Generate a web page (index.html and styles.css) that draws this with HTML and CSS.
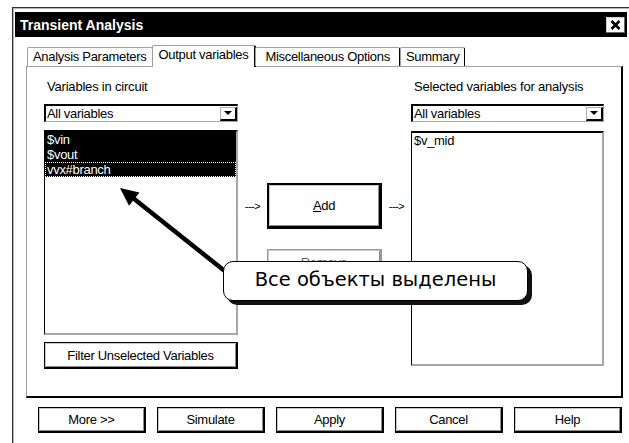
FILE: index.html
```html
<!DOCTYPE html>
<html lang="ru">
<head>
    <meta charset="UTF-8">
    <title>Transient Analysis</title>
    <link rel="stylesheet" href="styles.css">
</head>
<body>
    <div class="window">
        <div class="titlebar">
            <span class="title">Transient Analysis</span>
            <span class="close">
                <svg width="11" height="10" viewBox="0 0 11 10">
                    <path d="M1.5 1 L9.5 9 M9.5 1 L1.5 9" stroke="#000" stroke-width="2.6"/>
                </svg>
            </span>
        </div>

        <div class="dialog">
            <div class="tabs">
                <div class="tab">Analysis Parameters</div>
                <div class="tab active">Output variables</div>
                <div class="tab tab-wide">Miscellaneous Options</div>
                <div class="tab">Summary</div>
            </div>

            <div class="panel">
                <div class="column">
                    <div class="label">Variables in circuit</div>
                    <div class="combo">
                        <span>All variables</span>
                        <span class="combo-btn"><span class="caret"></span></span>
                    </div>
                    <ul class="listbox listbox-left">
                        <li class="selected">$vin</li>
                        <li class="selected">$vout</li>
                        <li class="selected focused">vvx#branch</li>
                    </ul>
                    <button class="btn btn-filter">Filter Unselected Variables</button>
                </div>

                <div class="middle">
                    <div class="move-row">
                        <span class="hint">---&gt;</span>
                        <button class="btn btn-default btn-big"><u>A</u>dd</button>
                        <span class="hint">---&gt;</span>
                    </div>
                    <div class="move-row move-row-second">
                        <span></span>
                        <button class="btn btn-disabled btn-remove">Remove</button>
                        <span></span>
                    </div>
                </div>

                <div class="column">
                    <div class="label">Selected variables for analysis</div>
                    <div class="combo">
                        <span>All variables</span>
                        <span class="combo-btn"><span class="caret"></span></span>
                    </div>
                    <ul class="listbox listbox-right">
                        <li>$v_mid</li>
                    </ul>
                </div>
            </div>

            <div class="actions">
                <button class="btn btn-action">More &gt;&gt;</button>
                <button class="btn btn-action">Simulate</button>
                <button class="btn btn-action">Apply</button>
                <button class="btn btn-action">Cancel</button>
                <button class="btn btn-action">Help</button>
            </div>
        </div>
    </div>

    <!-- callout drawn over the dialog -->
    <svg class="pointer" width="629" height="443" viewBox="0 0 629 443">
        <line x1="133" y1="198" x2="236" y2="280" stroke="#000" stroke-width="4.5"/>
        <polygon points="120,188 139.5,192.5 129,205.8" fill="#000"/>
    </svg>
    <div class="bubble">Все объекты выделены</div>
</body>
</html>
```

FILE: styles.css
```css
body {
    margin: 0;
    width: 629px;
    height: 443px;
    overflow: hidden;
    position: relative;
    background-color: #fff;
    font-family: "Liberation Sans", Arial, sans-serif;
    font-size: 13px;
    letter-spacing: -0.3px;
    color: #000;
}
.window {
    margin: 7px 0 0 12px;
    width: 620px;
    height: 440px;
    box-sizing: border-box;
    padding: 4px 0 0 2px;
    border-top: 1px solid #333;
    border-left: 1px solid #333;
    box-shadow: inset 1px 1px #b4b4b4;
}
.titlebar {
    width: 612px;
    height: 25px;
    box-sizing: border-box;
    padding: 0 2px 0 5px;
    display: flex;
    align-items: center;
    justify-content: space-between;
    background-color: #000;
    color: #fff;
}
.title {
    font-size: 14px;
    font-weight: bold;
    letter-spacing: 0;
}
.close {
    width: 19px;
    height: 16px;
    display: flex;
    align-items: center;
    justify-content: center;
    background-color: #fff;
    box-shadow: inset -1px -1px #666, inset 1px 1px #ccc;
}
.dialog {
    padding: 8px 5px 0 11px;
}
.tabs {
    position: relative;
    z-index: 1;
    height: 21px;
    padding-left: 1px;
    display: flex;
    align-items: flex-end;
}
.tab {
    height: 19px;
    padding: 0 5px;
    box-sizing: border-box;
    line-height: 18px;
    background-color: #fff;
    border: 1px solid #a0a0a0;
    border-right: 1px solid #000;
    border-bottom: none;
    border-radius: 2px 2px 0 0;
}
.tab-wide {
    padding: 0 9px;
}
.tab.active {
    height: 22px;
    margin: 0 -1px -1px -1px;
    padding: 0 6px;
    line-height: 17px;
    border-right-width: 2px;
}
.panel {
    width: 597px;
    height: 332px;
    box-sizing: border-box;
    padding: 13px 0 0 17px;
    display: grid;
    grid-template-columns: 194px 173px 193px;
    align-items: start;
    border: 1px solid #a0a0a0;
    border-right: 2px solid #000;
    border-bottom: 2px solid #000;
}
.label {
    line-height: 14px;
    padding-left: 3px;
    letter-spacing: -0.2px;
}
.combo {
    margin-top: 10px;
    height: 18px;
    box-sizing: border-box;
    padding-left: 1px;
    display: flex;
    align-items: center;
    justify-content: space-between;
    border-style: solid;
    border-width: 2px 1px 1px 2px;
    border-color: #000 #a8a8a8 #a8a8a8 #000;
    line-height: 14px;
}
.combo-btn {
    width: 17px;
    height: 14px;
    box-sizing: border-box;
    display: flex;
    align-items: center;
    justify-content: center;
    border-style: solid;
    border-width: 1px 2px 2px 1px;
    border-color: #b0b0b0 #000 #000 #b0b0b0;
}
.caret {
    width: 0;
    height: 0;
    border-left: 4px solid transparent;
    border-right: 4px solid transparent;
    border-top: 4px solid #000;
}
.listbox {
    list-style: none;
    margin: 8px 0 0 0;
    padding: 0;
    box-sizing: border-box;
    border-style: solid;
    border-width: 2px 2px 2px 1px;
    border-color: #000 #a8a8a8 #a8a8a8 #000;
}
.listbox li {
    height: 15px;
    line-height: 15px;
    padding-left: 2px;
}
.listbox-left {
    height: 205px;
}
.listbox-right {
    margin-top: 9px;
    height: 235px;
}
.listbox li.selected {
    background-color: #000;
    color: #fff;
}
.listbox li.focused {
    outline: 1px dotted #fff;
    outline-offset: -1px;
}
.btn {
    font: inherit;
    letter-spacing: inherit;
    color: #000;
    background-color: #fff;
    padding: 0;
    box-sizing: border-box;
    border: 1px solid #000;
    border-right-width: 2px;
    border-bottom-width: 2px;
    box-shadow: inset 1px 1px #c8c8c8, inset -1px -1px #8c8c8c;
}
.btn-filter {
    margin-top: 7px;
    width: 194px;
    height: 27px;
}
.middle {
    padding-top: 103px;
}
.move-row {
    display: grid;
    grid-template-columns: 29px 115px 29px;
    align-items: center;
}
.move-row-second {
    margin-top: 20px;
}
.hint {
    font-size: 11px;
    letter-spacing: -0.5px;
    text-align: center;
}
.btn-big {
    height: 46px;
}
.btn-default {
    border-width: 2px 3px 3px 2px;
}
.btn-disabled {
    color: #666;
    border-color: #999;
}
.btn-remove {
    height: 28px;
}
.actions {
    margin-top: 9px;
    padding-left: 12px;
    display: flex;
    gap: 11px;
}
.btn-action {
    width: 108px;
    height: 26px;
}
.pointer {
    position: absolute;
    left: 0;
    top: 0;
    pointer-events: none;
}
.bubble {
    position: absolute;
    left: 223px;
    top: 261px;
    width: 305px;
    height: 40px;
    box-sizing: border-box;
    border: 1.5px solid #000;
    border-radius: 10px;
    background-color: #fff;
    box-shadow: 4px 4px 0 #111;
    font-family: "DejaVu Sans", Verdana, sans-serif;
    font-size: 19.5px;
    letter-spacing: 0;
    line-height: 36px;
    text-align: center;
}
```
